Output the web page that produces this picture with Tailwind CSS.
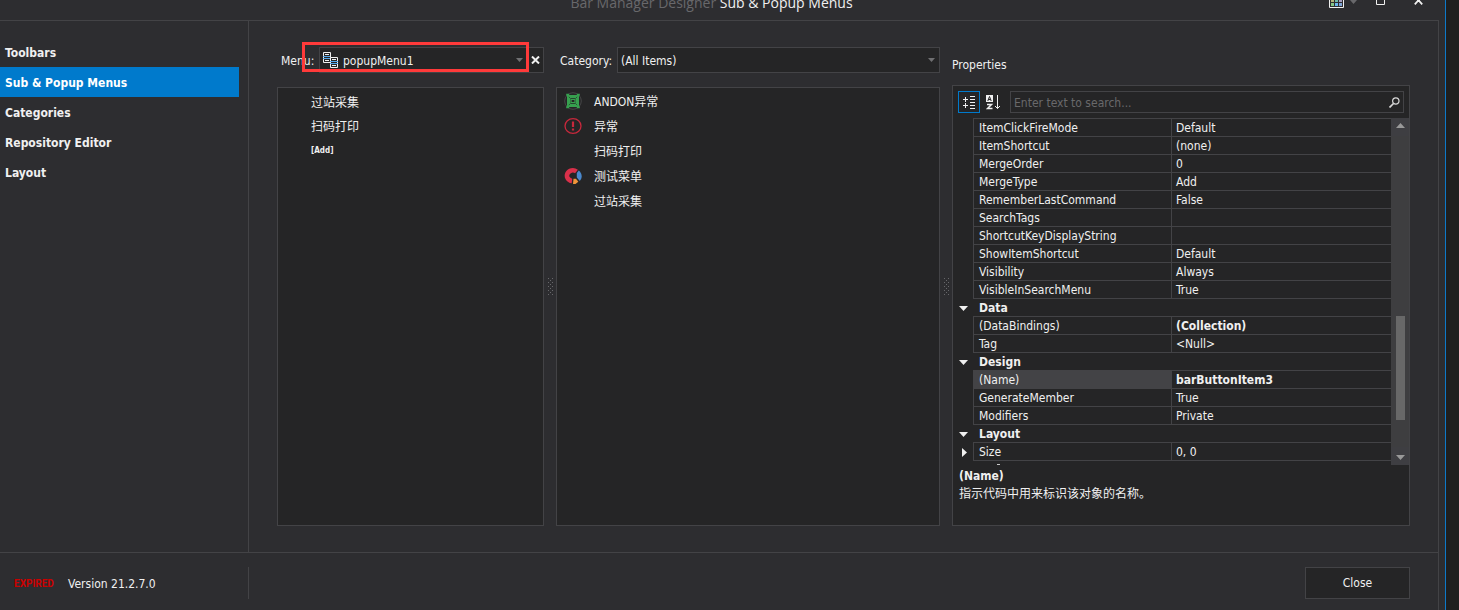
<!DOCTYPE html>
<html lang="en">
<head>
<meta charset="utf-8">
<title>Bar Manager Designer</title>
<script src="https://cdn.jsdelivr.net/npm/@tailwindcss/browser@4"></script>
</head>
<body class="flex min-h-screen bg-[#1f1f1f] font-['DejaVu_Sans_Condensed','Noto_Sans_CJK_SC',sans-serif] text-[12px] leading-[18px] text-[#f0f0f0]">
<div class="flex flex-1 flex-col border-r border-[#0e79c8] bg-[#2d2d30]">

  <header class="flex h-5 items-end overflow-hidden pr-[22px]">
    <div class="flex-1"></div>
    <h1 class="mb-px font-['Open_Sans',sans-serif] text-[14px] leading-[32px]"><span class="text-[#68686b]">Bar Manager Designer</span> Sub &amp; Popup Menus</h1>
    <div class="flex flex-1 items-start justify-end self-start">
      <button type="button" aria-label="Layout options" class="mr-[19px] flex gap-[6px]">
        <svg width="15" height="8" viewBox="0 0 15 8"><path d="M.5 0v7.500h14V0" fill="none" stroke="#f0f0f0"/><path d="M2 0h3v2H2z" fill="#b5b47c"/><path d="M6 0h3v2H6z" fill="#70b8a8"/><path d="M10 0h3v2h-3z" fill="#a79fc0"/><path d="M2 3h3v3H2z" fill="#86c786"/><path d="M6 3h3v3H6z" fill="#6bb5ee"/><path d="M10 3h3v3h-3z" fill="#7fa5d8"/></svg>
        <svg width="7" height="4" viewBox="0 0 7 4"><path d="M0 0h7L3.500 4z" fill="#68686b"/></svg>
      </button>
      <button type="button" aria-label="Maximize" class="mr-[29px]"><svg class="block" width="9" height="5" viewBox="0 0 9 5"><path d="M.5 0v4.500h8V0" fill="none" stroke="#f0f0f0"/></svg></button>
      <button type="button" aria-label="Close window"><svg class="block" width="9" height="5" viewBox="0 0 9 5"><path d="M.8 4.300 4.500.2l3.700 4.100M3 0l3 0" fill="none" stroke="#f0f0f0" stroke-width="1.800"/></svg></button>
    </div>
  </header>

  <div class="mr-[6px] flex flex-1 flex-col border-t border-r border-[#434346]">
    <div class="flex flex-1 border-b border-[#434346]">
      <nav class="w-[249px] shrink-0 border-r border-[#434346] pt-4 pr-[9px] font-bold leading-[28px]">
        <a href="#" class="block pt-[2px] pl-[5px]">Toolbars</a>
        <a href="#" class="block bg-[#007acc] pt-[2px] pl-[5px] text-white">Sub &amp; Popup Menus</a>
        <a href="#" class="block pt-[2px] pl-[5px]">Categories</a>
        <a href="#" class="block pt-[2px] pl-[5px]">Repository Editor</a>
        <a href="#" class="block pt-[2px] pl-[5px]">Layout</a>
      </nav>

      <main class="grid flex-1 grid-cols-[267fr_12px_384fr_12px_458fr] pt-[26px] pr-7 pb-[26px] pl-7">
        <section class="flex min-w-0 flex-col">
          <div class="relative flex h-[26px] items-center">
            <label for="menu" class="w-[42px] pt-[2px] pl-1">Menu:</label>
            <div class="flex h-full min-w-0 flex-1 items-center border border-[#434346] bg-[#252526] pr-[3px] pl-[3px]">
              <svg class="shrink-0" width="16" height="16" viewBox="0 0 16 16" fill="none"><path d="M7 10.500H.5V.5h7v5M7.500 5.500h7v10h-7z" stroke="#f0f0f0"/><path d="M2 2.500h4M2 8.500h4M9 7.500h4M9 13.500h4" stroke="#f0f0f0"/><path d="M0 4.500h7M0 6.500h7M7 9.500h8M7 11.500h8" stroke="#55a8ea"/></svg>
              <select id="menu" class="min-w-0 flex-1 appearance-none bg-transparent pt-[2px] pl-1 outline-none"><option>popupMenu1</option></select>
              <svg class="mr-2 shrink-0" width="7" height="4" viewBox="0 0 7 4"><path d="M0 0h7L3.500 4z" fill="#707072"/></svg>
              <button type="button" aria-label="Delete menu"><svg class="block" width="9" height="8" viewBox="0 0 9 8"><path d="M1 .5 8 7.500M8 .5 1 7.500" stroke="#f0f0f0" stroke-width="2"/></svg></button>
            </div>
            <div class="pointer-events-none absolute -top-[5px] right-[15px] bottom-px left-[25px] border-3 border-[#ff3a3a]"></div>
          </div>
          <ul class="mt-[14px] flex-1 border border-[#434346] bg-[#252526] pt-[3px] pl-[33px] leading-6">
            <li>过站采集</li>
            <li>扫码打印</li>
            <li class="text-[8px] font-bold">[Add]</li>
          </ul>
        </section>

        <div class="flex items-center justify-center"><svg width="5" height="17" viewBox="0 0 5 17" fill="#68686b"><path d="M0 0h1v1H0zM4 0h1v1H4zM2 2h1v1H2zM0 4h1v1H0zM4 4h1v1H4zM2 6h1v1H2zM0 8h1v1H0zM4 8h1v1H4zM2 10h1v1H2zM0 12h1v1H0zM4 12h1v1H4zM2 14h1v1H2zM0 16h1v1H0zM4 16h1v1H4z"/></svg></div>

        <section class="flex min-w-0 flex-col">
          <div class="flex h-[26px] items-center">
            <label for="category" class="w-[61px] pt-[2px] pl-1">Category:</label>
            <div class="flex h-full min-w-0 flex-1 items-center border border-[#434346] bg-[#252526] pr-1">
              <select id="category" class="min-w-0 flex-1 appearance-none bg-transparent pt-[2px] pl-[3px] outline-none"><option>(All Items)</option></select>
              <svg class="shrink-0" width="7" height="4" viewBox="0 0 7 4"><path d="M0 0h7L3.500 4z" fill="#707072"/></svg>
            </div>
          </div>
          <ul class="mt-[14px] flex-1 border border-[#434346] bg-[#252526] pt-[2px] pl-[7px] leading-[25px]">
            <li class="flex items-center"><svg class="mr-3 mb-1 w-[18px]" width="18" height="18" viewBox="0 0 18 18" fill="none"><circle cx="9" cy="9" r="8.300" stroke="#454547"/><path d="M4.500 4.500h9v9h-9z" stroke="#37a04f" stroke-width="3"/><path d="M2.200 2.800h3M12.800 2.800h3M2.200 15.200h3M12.800 15.200h3" stroke="#37a04f" stroke-width="2"/><path d="M4.800 4.800l8.400 8.400M13.200 4.800l-8.400 8.400" stroke="#225f30" stroke-width="1"/><path d="M7 7.300h4v3.400H7z" fill="#252526" stroke="#37a04f" stroke-width="1.300"/></svg>ANDON异常</li>
            <li class="flex items-center"><svg class="mr-3 mb-1" width="18" height="18" viewBox="0 0 18 18" fill="none"><ellipse cx="9" cy="9" rx="8" ry="7.400" stroke="#c8283c" stroke-width="1.300"/><path d="M9 4.500v5.500M9 11.500v2" stroke="#c8283c" stroke-width="2.200"/></svg>异常</li>
            <li class="pl-[30px]">扫码打印</li>
            <li class="flex items-center"><svg class="mr-3 mb-1" width="18" height="18" viewBox="0 0 18 18" fill="none"><path d="M8 14A5.800 5.400 0 1 1 12.500 4.500" stroke="#d9304a" stroke-width="4.600"/><path d="M14.800 3.500c3.500 3 3.800 7.500 1 10.500l-3-3.500V6z" fill="#4a88cc"/><path d="M9.500 11.800h2.500l2.300 3-2.800 2.200H9z" fill="#f0953a"/></svg>测试菜单</li>
            <li class="pl-[30px]">过站采集</li>
          </ul>
        </section>

        <div class="flex items-center justify-center"><svg width="5" height="17" viewBox="0 0 5 17" fill="#68686b"><path d="M0 0h1v1H0zM4 0h1v1H4zM2 2h1v1H2zM0 4h1v1H0zM4 4h1v1H4zM2 6h1v1H2zM0 8h1v1H0zM4 8h1v1H4zM2 10h1v1H2zM0 12h1v1H0zM4 12h1v1H4zM2 14h1v1H2zM0 16h1v1H0zM4 16h1v1H4z"/></svg></div>

        <section class="flex min-w-0 flex-col pt-[9px]">
          <h2 class="mb-[11px]">Properties</h2>
          <div class="flex-1 border border-[#434346] bg-[#252526] pt-[5px]">
            <div class="flex h-[22px] items-center pr-[5px] pl-[5px]">
              <button type="button" aria-label="Categorized" class="flex size-[22px] items-center justify-center border border-[#007acc]"><svg width="12" height="13" viewBox="0 0 12 13" fill="none" stroke="#f0f0f0"><path d="M0 3.500h5M2.500 1v5M0 9.500h5M2.500 7v5M7 .5h5M7 3.500h5M7 6.500h5M7 9.500h5M7 12.500h5"/></svg></button>
              <button type="button" aria-label="Sort alphabetically" class="ml-[6px]"><svg class="block" width="14" height="15" viewBox="0 0 14 15" fill="none"><path d="M0 0h7v7H0z" fill="#f0f0f0"/><path d="M1.800 6 3.500 1.500 5.200 6M2.300 4.500h2.400" stroke="#252526"/><path d="M1 9.500h4.500L1.500 13.500h5" stroke="#f0f0f0" stroke-width="1.500"/><path d="M11.500 0v13.500M9 11l2.500 2.500L14 11" stroke="#f0f0f0"/></svg></button>
              <div class="ml-[10px] flex h-full flex-1 items-center border border-[#434346] pr-[3px]">
                <input type="search" aria-label="Search properties" placeholder="Enter text to search..." class="min-w-0 flex-1 bg-transparent pt-px pl-[3px] outline-none placeholder:text-[#69696b]">
                <svg width="11" height="11" viewBox="0 0 11 11" fill="none" stroke="#d8d8d8"><circle cx="6.800" cy="4" r="3.200" stroke-width="1.200"/><path d="M4.500 6.500.5 10.500" stroke-width="1.700"/></svg>
              </div>
            </div>

            <div class="mt-[5px] flex h-[347px]">
              <div class="min-w-0 flex-1 overflow-hidden">
                <table aria-label="Properties" class="w-full table-fixed border-separate border-spacing-0 text-left leading-[15px] [&_td]:border-t [&_td]:border-l [&_td]:border-[#434346] [&_td]:p-0 [&_td]:pt-[2px] [&_td]:pl-1 [&_th]:border-l [&_th]:border-[#434346] [&_tr>*]:h-[18px]">
                  <colgroup><col class="w-5"><col class="w-[198px]"><col></colgroup>
                  <tbody class="[&_th]:p-0 [&_th]:pt-[2px] [&_th]:pl-[5px] [&_th]:border-t [&_th]:font-normal">
                    <tr><td class="border-none!"></td><th scope="row">ItemClickFireMode</th><td>Default</td></tr>
                    <tr><td class="border-none!"></td><th scope="row">ItemShortcut</th><td>(none)</td></tr>
                    <tr><td class="border-none!"></td><th scope="row">MergeOrder</th><td>0</td></tr>
                    <tr><td class="border-none!"></td><th scope="row">MergeType</th><td>Add</td></tr>
                    <tr><td class="border-none!"></td><th scope="row">RememberLastCommand</th><td>False</td></tr>
                    <tr><td class="border-none!"></td><th scope="row">SearchTags</th><td></td></tr>
                    <tr><td class="border-none!"></td><th scope="row">ShortcutKeyDisplayString</th><td></td></tr>
                    <tr><td class="border-none!"></td><th scope="row">ShowItemShortcut</th><td>Default</td></tr>
                    <tr><td class="border-none!"></td><th scope="row">Visibility</th><td>Always</td></tr>
                    <tr><td class="border-none!"></td><th scope="row">VisibleInSearchMenu</th><td>True</td></tr>
                    <tr><td class="border-none!"><button type="button" aria-label="Collapse Data" class="ml-[2px] block"><svg width="9" height="5" viewBox="0 0 9 5"><path d="M0 0h9L4.500 5z" fill="#f0f0f0"/></svg></button></td><th scope="rowgroup" colspan="2" class="border-l-0! pl-[6px]! font-bold!">Data</th></tr>
                    <tr><td class="border-none!"></td><th scope="row">(DataBindings)</th><td class="font-bold">(Collection)</td></tr>
                    <tr><td class="border-none!"></td><th scope="row">Tag</th><td>&lt;Null&gt;</td></tr>
                    <tr><td class="border-none!"><button type="button" aria-label="Collapse Design" class="ml-[2px] block"><svg width="9" height="5" viewBox="0 0 9 5"><path d="M0 0h9L4.500 5z" fill="#f0f0f0"/></svg></button></td><th scope="rowgroup" colspan="2" class="border-l-0! pl-[6px]! font-bold!">Design</th></tr>
                    <tr><td class="border-none!"></td><th scope="row" class="bg-[#434346]">(Name)</th><td class="font-bold">barButtonItem3</td></tr>
                    <tr><td class="border-none!"></td><th scope="row">GenerateMember</th><td>True</td></tr>
                    <tr><td class="border-none!"></td><th scope="row">Modifiers</th><td>Private</td></tr>
                    <tr><td class="border-none!"><button type="button" aria-label="Collapse Layout" class="ml-[2px] block"><svg width="9" height="5" viewBox="0 0 9 5"><path d="M0 0h9L4.500 5z" fill="#f0f0f0"/></svg></button></td><th scope="rowgroup" colspan="2" class="border-l-0! pl-[6px]! font-bold!">Layout</th></tr>
                    <tr><td class="border-none!"><button type="button" aria-label="Expand Size" class="ml-[5px] block"><svg class="block" width="5" height="9" viewBox="0 0 5 9"><path d="M0 0v9L5 4.500z" fill="#f0f0f0"/></svg></button></td><th scope="row">Size</th><td>0, 0</td></tr>
                  </tbody>
                </table>
                <div class="ml-5 border-t border-[#434346] pt-[3px] pl-6"><div class="h-px w-[3px] bg-[#c8c8c8]"></div></div>
              </div>
              <div class="flex w-[18px] flex-col items-center bg-[#3e3e40]">
                <button type="button" aria-label="Scroll up" class="flex h-[18px] w-full items-center justify-center bg-[#3e3e42] pb-[3px]"><svg width="9" height="5" viewBox="0 0 9 5"><path d="M0 5h9L4.500 0z" fill="#999"/></svg></button>
                <div class="mt-[180px] h-[104px] w-[9px] bg-[#686868]"></div>
                <button type="button" aria-label="Scroll down" class="mt-auto flex h-[18px] w-full items-center justify-center bg-[#3e3e42] pt-[3px]"><svg width="9" height="5" viewBox="0 0 9 5"><path d="M0 0h9L4.500 5z" fill="#999"/></svg></button>
              </div>
            </div>
            <div class="pt-[2px] pl-[6px]">
              <h3 class="font-bold">(Name)</h3>
              <p>指示代码中用来标识该对象的名称。</p>
            </div>
          </div>
        </section>
      </main>
    </div>

    <footer class="flex h-[57px] items-start pt-[14px] pr-7">
      <div class="flex h-8 w-[249px] items-center border-r border-[#434346] pt-[2px] pl-[14px]">
        <span class="w-[54px] font-['Roboto',sans-serif] text-[10px] font-bold text-[#cc0000]">EXPIRED</span>
        <span>Version 21.2.7.0</span>
      </div>
      <button type="button" class="ml-auto h-8 w-[105px] border border-[#434346] bg-[#252526]">Close</button>
    </footer>
  </div>
</div>
<div class="w-[13px] shrink-0"></div>
</body>
</html>
